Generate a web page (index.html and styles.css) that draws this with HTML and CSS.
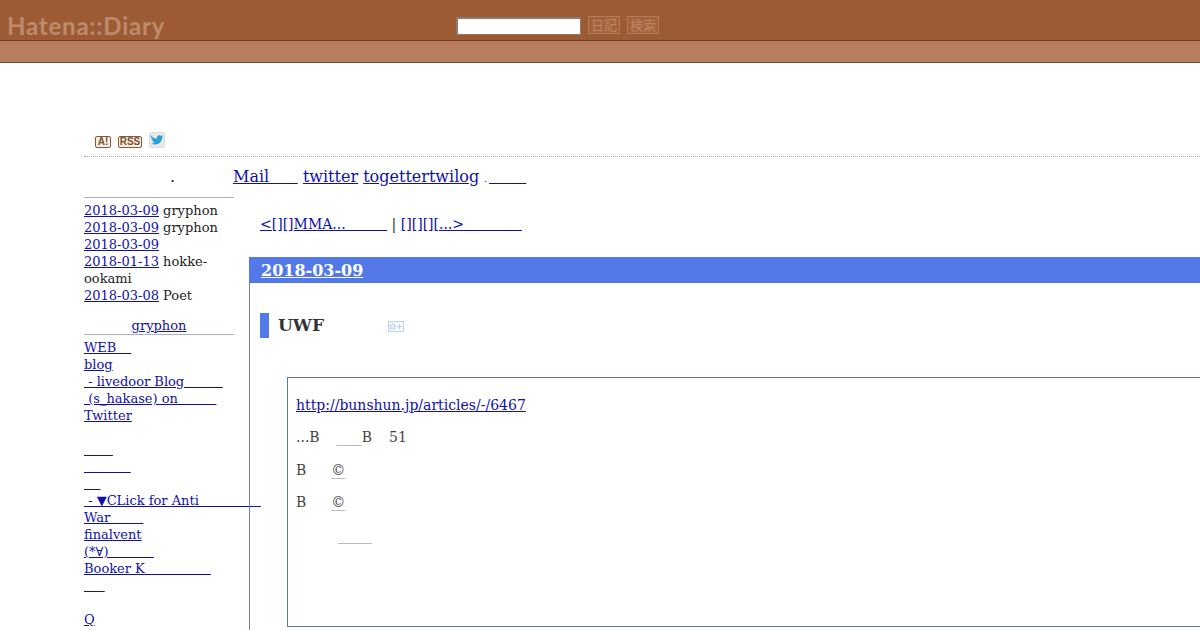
FILE: index.html
```html
<!DOCTYPE html>
<html lang="ja">
<head>
<meta charset="utf-8">
<title>Hatena::Diary</title>
<link rel="stylesheet" href="styles.css">
</head>
<body>
<header class="masthead">
  <div class="logo">Hatena::Diary</div>
  <form class="search">
    <input class="search-input" type="text">
    <button class="search-btn" type="button">日記</button>
    <button class="search-btn" type="button">検索</button>
  </form>
</header>
<div class="subbar"></div>
<div class="page">
  <div class="badges">
    <span class="badge badge-a">A!</span>
    <span class="badge badge-rss">RSS</span>
    <svg class="bird-icon" width="16" height="16" viewBox="0 0 16 16">
      <rect x="0.5" y="0.5" width="15" height="15" rx="1.5" fill="#e9e9e7" stroke="#dcdcda"/>
      <path d="M1.500 3c2 2.400 4 3.500 6.300 3.700-.3-2.100 1.300-3.800 3.100-3.400.6.100 1 .4 1.300.7l1.800-.7-1 1.600 1.200-.3-1.200 1.400c0 3.600-3 6.500-6.900 6.500-1.500 0-2.800-.4-3.800-1.100 1.300.1 2.500-.3 3.400-1-1.200 0-2.100-.8-2.400-1.800h1.200C3.200 8.300 2.400 7.300 2.400 6l1.100.3C2 5.300 1.100 4.200 1.500 3z" fill="#27a3d8"/>
    </svg>
  </div>
  <nav class="toplinks">
    <div class="title-dot">.</div>
    <div class="toplinks-list">
      <a href="#">Mail&nbsp;&nbsp;&nbsp;&nbsp;&nbsp;&#x2009;</a> <a href="#">twitter</a> <a href="#">togetter</a><a href="#">twilog</a> <span class="tiny">.</span><a href="#">&nbsp;&nbsp;&nbsp;&nbsp;&nbsp;&nbsp;&nbsp;&#x200A;</a>
    </div>
  </nav>
  <div class="columns">
    <aside class="sidebar">
      <ul class="recent">
        <li><a href="#">2018-03-09</a> gryphon</li>
        <li><a href="#">2018-03-09</a> gryphon</li>
        <li><a href="#">2018-03-09</a></li>
        <li><a href="#">2018-01-13</a> hokke-ookami</li>
        <li><a href="#">2018-03-08</a> Poet</li>
      </ul>
      <h3 class="side-title"><a href="#">gryphon</a></h3>
      <ul class="side-list">
        <li><a href="#">WEB&nbsp;&nbsp;&nbsp;&#x2009;</a></li>
        <li><a href="#">blog</a></li>
        <li><a href="#">&nbsp;- livedoor Blog&nbsp;&nbsp;&nbsp;&nbsp;&nbsp;&nbsp;&nbsp;&nbsp;&nbsp;&#x200A;</a></li>
        <li><a href="#">&nbsp;(s_hakase) on&nbsp;&nbsp;&nbsp;&nbsp;&nbsp;&nbsp;&nbsp;&nbsp;&nbsp;&#x200A;</a></li>
        <li><a href="#">Twitter</a></li>
      </ul>
      <ul class="side-list">
        <li><a href="#">&nbsp;&nbsp;&nbsp;&nbsp;&nbsp;&nbsp;&nbsp;</a></li>
        <li><a href="#">&nbsp;&nbsp;&nbsp;&nbsp;&nbsp;&nbsp;&nbsp;&nbsp;&nbsp;&nbsp;&nbsp;&#x200A;</a></li>
        <li><a href="#">&nbsp;&nbsp;&nbsp;&nbsp;</a></li>
        <li><a href="#"><span class="nowrap">&nbsp;- ▼CLick for Anti&nbsp;&nbsp;&nbsp;&nbsp;&nbsp;&nbsp;&nbsp;&nbsp;&nbsp;&nbsp;&nbsp;&nbsp;&nbsp;&nbsp;&nbsp;</span> War&nbsp;&nbsp;&nbsp;&nbsp;&nbsp;&nbsp;&nbsp;&nbsp;</a></li>
        <li><a href="#">finalvent</a></li>
        <li><a href="#">(*∀)&nbsp;&nbsp;&nbsp;&nbsp;&nbsp;&nbsp;&nbsp;&nbsp;&nbsp;&nbsp;&nbsp;</a></li>
        <li><a href="#">Booker K&nbsp;&nbsp;&nbsp;&nbsp;&nbsp;&nbsp;&nbsp;&nbsp;&nbsp;&nbsp;&nbsp;&nbsp;&nbsp;&nbsp;&nbsp;&nbsp;</a></li>
        <li><a href="#">&nbsp;&nbsp;&nbsp;&nbsp;&nbsp;</a></li>
      </ul>
      <ul class="side-list">
        <li><a href="#">Q</a></li>
      </ul>
    </aside>
    <main class="main">
      <div class="pager"><a href="#">&lt;[][]MMA...&nbsp;&nbsp;&nbsp;&nbsp;&nbsp;&nbsp;&nbsp;&nbsp;&nbsp;&#x200A;</a> | <a href="#">[][][][...&gt;&nbsp;&nbsp;&nbsp;&nbsp;&nbsp;&nbsp;&nbsp;&nbsp;&nbsp;&nbsp;&nbsp;&nbsp;&nbsp;</a></div>
      <article class="day">
        <h2 class="day-date"><a href="#">2018-03-09</a></h2>
        <div class="day-body">
          <h3 class="entry-title">
            <span class="entry-name">UWF</span>
            <svg class="star-icon" width="16" height="11" viewBox="0 0 16 11">
              <rect x="0.5" y="0.5" width="15" height="10" fill="#f6f9fc" stroke="#bfd3e4"/>
              <path d="M4.500 2l1 2.300 2.300.2-1.800 1.500.6 2.300-2.100-1.200-2.100 1.200.6-2.300L1.200 4.500l2.300-.2zM9 5.500h5M11.500 3v5" fill="none" stroke="#b2cadf" stroke-width=".8"/>
            </svg>
          </h3>
          <blockquote class="quote">
            <p><a href="#">http://bunshun.jp/articles/-/6467</a></p>
            <p>...B<span class="gap-a"></span><a class="soft" href="#">&nbsp;&nbsp;&nbsp;&nbsp;&nbsp;&#x2009;</a>B<span class="gap-b"></span>51</p>
            <p>B<span class="gap-c"></span><a class="soft" href="#">©</a></p>
            <p>B<span class="gap-c"></span><a class="soft" href="#">©</a></p>
            <p><span class="gap-d"></span><a class="soft" href="#">&nbsp;&nbsp;&nbsp;&nbsp;&nbsp;&nbsp;&nbsp;&#x2009;</a></p>
          </blockquote>
        </div>
      </article>
    </main>
  </div>
</div>
</body>
</html>
```
FILE: styles.css
```css
html, body {
  margin: 0;
  padding: 0;
  height: 630px;
  overflow: hidden;
  background: #fff;
}
body {
  font-family: "DejaVu Serif", serif;
  font-size: 13px;
  line-height: 17px;
  color: #222;
}
a { color: #1111aa; }
ul { list-style: none; margin: 0; padding: 0; }
.nowrap { white-space: nowrap; }

.masthead {
  height: 40px;
  background: #9c5b34;
  border-bottom: 1px solid #6e3d1f;
  display: flex;
  align-items: flex-start;
}
.logo {
  width: 456px;
  flex: none;
  padding: 11px 0 0 7px;
  box-sizing: border-box;
  font-family: "Lato", sans-serif;
  font-weight: 700;
  font-size: 24px;
  line-height: 30px;
  letter-spacing: 0.8px;
  color: #bd8a6e;
}
.search {
  display: flex;
  gap: 7px;
  padding-top: 16px;
}
.search-input {
  width: 125px;
  height: 18px;
  margin: 1px 0 0;
  padding: 0;
  box-sizing: border-box;
  background: #fff;
  border: 1px solid #8f7a6c;
  border-top-width: 2px;
  border-left-width: 2px;
  border-radius: 0;
}
.search-btn {
  width: 32px;
  height: 18px;
  margin: 0;
  padding: 0;
  background: #a4623c;
  border: 1px solid #b67a58;
  color: #bd8668;
  font-family: "Noto Sans CJK JP", sans-serif;
  font-size: 13px;
  line-height: 14px;
}
.subbar {
  height: 21px;
  background: #b87d5f;
  border-bottom: 1px solid #6b4630;
}
.page {
  width: 1500px;
  padding-left: 84px;
}
.badges {
  height: 94px;
  box-sizing: border-box;
  padding: 69px 0 0 11px;
  display: flex;
  align-items: flex-start;
  border-bottom: 1px dotted #9fa8c0;
}
.badge {
  box-sizing: border-box;
  height: 12px;
  margin-top: 4px;
  margin-right: 7px;
  display: flex;
  align-items: center;
  justify-content: center;
  background: #f5eee4;
  border: 1px solid #8a5a36;
  border-radius: 2px;
  color: #7d4f2f;
  font-family: "Liberation Sans", sans-serif;
  font-weight: 700;
  font-size: 10px;
  line-height: 10px;
}
.badge-a { width: 16px; }
.badge-rss { width: 24px; }
.toplinks {
  display: flex;
  height: 40px;
  padding-top: 10px;
  box-sizing: border-box;
  font-size: 16px;
  line-height: 20px;
}
.title-dot {
  width: 149px;
  box-sizing: border-box;
  padding-left: 86px;
}
.tiny { font-size: 9px; margin-right: 2px; }
.columns { display: flex; }
.sidebar {
  width: 150px;
  flex: none;
}
.recent {
  border-top: 1px solid #a9b0cc;
  padding-top: 4px;
}
.side-title {
  margin: 13px 0 4px;
  font-size: 13px;
  line-height: 17px;
  font-weight: 400;
  text-align: center;
  border-bottom: 1px solid #a9b0cc;
}
.side-list { margin-bottom: 17px; }
.main {
  flex: 1;
  margin-left: 15px;
}
.pager {
  padding: 17px 0 0 11px;
  height: 43px;
  font-size: 14px;
  line-height: 20px;
}
.day { border-left: 1px solid #6a7fae; }
.day-date {
  margin: 0 0 0 -1px;
  height: 26px;
  padding-left: 12px;
  background: #5279e7;
  font-size: 16px;
  line-height: 28px;
  font-weight: 700;
}
.day-date a { color: #fff; }
.day-body {
  padding: 30px 0 0 10px;
  height: 400px;
}
.entry-title {
  margin: 0;
  height: 25px;
  display: flex;
  align-items: center;
  border-left: 9px solid #5279e7;
  padding-left: 9px;
  font-size: 17px;
  line-height: 25px;
  color: #333;
}
.entry-name { width: 110px; }
.star-icon { margin-top: 2px; }
.quote {
  margin: 39px 0 0 27px;
  height: 250px;
  box-sizing: border-box;
  border: 1px solid #5a78a8;
  padding: 17.75px 8px 0;
  font-size: 14px;
  line-height: 18.5px;
  color: #444;
}
.quote p { margin: 0 0 14px; }
.soft { color: #444; text-decoration-color: #bbb; text-underline-offset: 3px; }
.gap-a { display: inline-block; width: 17px; }
.gap-b { display: inline-block; width: 17px; }
.gap-c { display: inline-block; width: 25px; }
.gap-d { display: inline-block; width: 42px; }
```
